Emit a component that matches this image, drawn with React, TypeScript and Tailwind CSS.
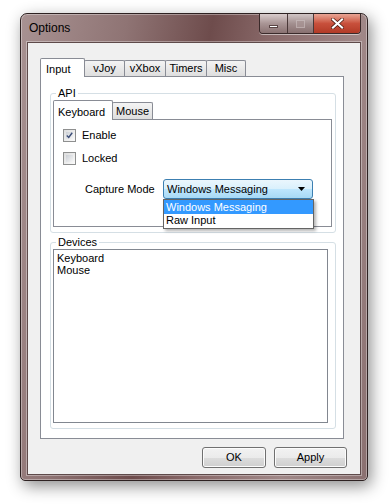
import React from 'react';

// Types
interface TabItem {
  id: string;
  label: string;
  width: number;
}

// Constants
const MAIN_TABS: readonly TabItem[] = [
  { id: 'input', label: 'Input', width: 45 },
  { id: 'vjoy', label: 'vJoy', width: 41 },
  { id: 'vxbox', label: 'vXbox', width: 42 },
  { id: 'timers', label: 'Timers', width: 42 },
  { id: 'misc', label: 'Misc', width: 40 },
];

const DEVICES = ['Keyboard', 'Mouse'];

const Checkbox = ({ checked, label }: { checked: boolean; label: string }) => (
  <div className="flex items-center h-[13px]">
    <div className="w-[13px] h-[13px] border border-[#8e8f8f] bg-gradient-to-br from-[#dcdcdc] to-[#fbfbfb] p-[2px]">
      <div className="w-full h-full bg-gradient-to-br from-[#cbcfd5] to-[#f6f6f6] flex items-center justify-center">
        {checked && (
          <svg width="9" height="9" viewBox="0 0 9 9">
            <path d="M1 4.5 L3.5 7 L8 1" fill="none" stroke="#3c4d78" strokeWidth="1.8" />
          </svg>
        )}
      </div>
    </div>
    <span className="ml-[6px]">{label}</span>
  </div>
);

const GroupBox = ({ label, className, children }: { label: string; className: string; children: React.ReactNode }) => (
  <div className={`relative border border-[#d5dfe5] rounded-[3px] shadow-[inset_1px_1px_0_#fff,1px_1px_0_#fff] ${className}`}>
    <span className="absolute -top-[8px] left-[5px] px-[2px] bg-white leading-[14px]">{label}</span>
    {children}
  </div>
);

const App = () => {
  return (
    <div className="w-[391px] h-[504px] bg-white overflow-hidden font-['Liberation_Sans',sans-serif] text-[11px] text-black">
      {/* Window frame */}
      <div className="ml-[20px] mt-[13px] w-[348px] h-[468px] flex flex-col rounded-t-[7px] rounded-b-[5px] border border-[#2e2222] bg-[linear-gradient(100deg,#a89292_0%,#8f7474_25%,#6e4c4c_45%,#8a6a6a_60%,#a08888_80%,#8a7070_100%)] shadow-[3px_5px_16px_rgba(0,0,0,0.45),inset_0_0_0_1px_rgba(255,255,255,0.35)]">
        {/* Title bar */}
        <div className="h-[28px] flex items-start shrink-0">
          <span className="ml-[8px] mt-[7px] text-[12px] text-black leading-[14px]">Options</span>
          <div className="ml-auto mr-[6px] flex h-[20px] rounded-b-[4px] border border-t-0 border-[#3a2a2a] overflow-hidden shadow-[0_1px_0_rgba(255,255,255,0.5)]">
            <div className="w-[28px] flex items-center justify-center border-r border-[#4a3838] bg-gradient-to-b from-[#d9cccc] via-[#a99595] to-[#8a7272]">
              <div className="w-[9px] h-[3px] mt-[5px] bg-white border border-[#5a4545]" />
            </div>
            <div className="w-[26px] flex items-center justify-center border-r border-[#4a3838] bg-gradient-to-b from-[#d0c4c4] via-[#a39090] to-[#887070]">
              <div className="w-[9px] h-[8px] border border-[#c9bcbc] bg-[#a89494] opacity-70" />
            </div>
            <div className="w-[46px] flex items-center justify-center bg-gradient-to-b from-[#e8a595] via-[#c8503c] to-[#b23a26]">
              <svg width="13" height="11" viewBox="0 0 13 11">
                <path d="M2 1.5 L11 9.5 M11 1.5 L2 9.5" stroke="#4a1a10" strokeWidth="3.6" strokeLinecap="square" />
                <path d="M2 1.5 L11 9.5 M11 1.5 L2 9.5" stroke="#ffffff" strokeWidth="2.2" strokeLinecap="square" />
              </svg>
            </div>
          </div>
        </div>

        {/* Client area */}
        <div className="mx-[6px] mb-[5px] flex-1 flex flex-col bg-[#f0f0f0] border border-[#5e4a4a] shadow-[0_0_0_1px_rgba(255,255,255,0.35)]">
          {/* Main tabs */}
          <div className="ml-[12px] mt-[14px] flex items-end h-[19px] relative z-10">
            {MAIN_TABS.map((tab, i) =>
              i === 0 ? (
                <div
                  key={tab.id}
                  style={{ width: tab.width }}
                  className="h-[19px] -mb-px bg-white border border-b-0 border-[#898c95] rounded-t-[2px] pl-[5px] pt-[2px]"
                >
                  {tab.label}
                </div>
              ) : (
                <div
                  key={tab.id}
                  style={{ width: tab.width }}
                  className="h-[16px] -ml-px bg-gradient-to-b from-[#f4f4f4] to-[#dedede] border border-b-0 border-[#898c95] rounded-t-[2px] flex items-center justify-center"
                >
                  {tab.label}
                </div>
              )
            )}
          </div>

          {/* Tab page */}
          <div className="ml-[12px] w-[304px] h-[363px] bg-white border border-[#898c95] flex flex-col">
            {/* API group */}
            <GroupBox label="API" className="ml-[9px] mt-[16px] w-[286px] h-[140px]">
              <div className="ml-[2px] mt-[5px] relative">
                <div className="flex items-end h-[20px] relative z-10">
                  <div className="w-[60px] h-[20px] -mb-px bg-white border border-b-0 border-[#898c95] rounded-t-[2px] pl-[4px] pt-[3px]">
                    Keyboard
                  </div>
                  <div className="w-[41px] h-[17px] -ml-px bg-gradient-to-b from-[#f4f4f4] to-[#dedede] border border-b-0 border-[#898c95] rounded-t-[2px] flex items-center justify-center">
                    Mouse
                  </div>
                </div>
                <div className="w-[279px] h-[108px] bg-white border border-[#898c95] pl-[9px] pt-[9px] flex flex-col">
                  <Checkbox checked label="Enable" />
                  <div className="mt-[10px]">
                    <Checkbox checked={false} label="Locked" />
                  </div>
                  <div className="mt-[14px] flex items-center relative">
                    <span className="ml-[22px] w-[78px]">Capture Mode</span>
                    <div className="w-[150px] h-[20px] rounded-[3px] border border-[#3c7fb1] bg-[linear-gradient(#eaf6fd_0%,#d9f0fc_50%,#bee6fd_51%,#a7d9f5_100%)] flex items-center pl-[3px] pr-[7px]">
                      <span>Windows Messaging</span>
                      <svg className="ml-auto" width="7" height="4" viewBox="0 0 7 4">
                        <path d="M0 0 L7 0 L3.5 4 Z" fill="#000" />
                      </svg>
                    </div>
                    {/* Open dropdown list */}
                    <div className="absolute left-[100px] top-[20px] w-[151px] border border-[#646464] bg-white shadow-[2px_2px_3px_rgba(0,0,0,0.3)] z-20 flex flex-col pb-[1px]">
                      <div className="h-[14px] leading-[14px] pl-[2px] bg-[#3399ff] text-white">Windows Messaging</div>
                      <div className="h-[13px] leading-[13px] pl-[2px]">Raw Input</div>
                    </div>
                  </div>
                </div>
              </div>
            </GroupBox>

            {/* Devices group */}
            <GroupBox label="Devices" className="ml-[9px] mt-[9px] w-[286px] h-[187px]">
              <div className="ml-[2px] mt-[6px] w-[275px] h-[174px] border border-[#828790] bg-white pl-[3px] pt-[2px] flex flex-col leading-[12px]">
                {DEVICES.map((d) => (
                  <span key={d}>{d}</span>
                ))}
              </div>
            </GroupBox>
          </div>

          {/* Buttons */}
          <div className="mt-[8px] ml-[174px] flex gap-[8px]">
            <button className="w-[64px] h-[21px] rounded-[3px] border border-[#707070] bg-[linear-gradient(#f2f2f2_0%,#ebebeb_50%,#dddddd_51%,#cfcfcf_100%)] shadow-[inset_0_0_0_1px_#fcfcfc] text-[11px]">
              OK
            </button>
            <button className="w-[73px] h-[21px] rounded-[3px] border border-[#707070] bg-[linear-gradient(#f2f2f2_0%,#ebebeb_50%,#dddddd_51%,#cfcfcf_100%)] shadow-[inset_0_0_0_1px_#fcfcfc] text-[11px]">
              Apply
            </button>
          </div>
        </div>
      </div>
    </div>
  );
};

export default App;
